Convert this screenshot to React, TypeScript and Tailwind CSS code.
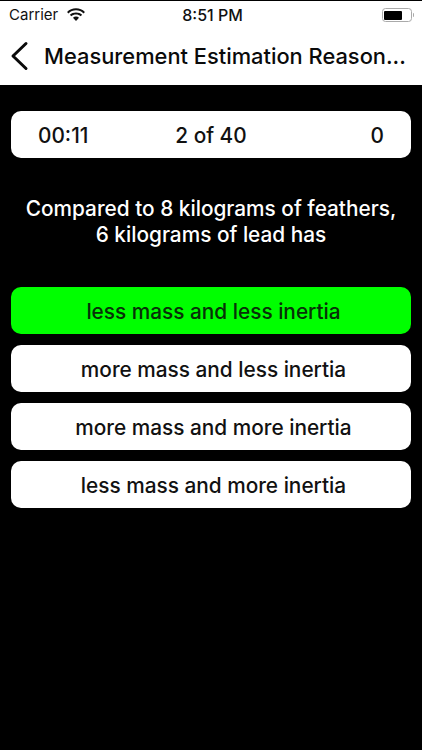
const ANSWERS = [
  { text: "less mass and less inertia", correct: true },
  { text: "more mass and less inertia", correct: false },
  { text: "more mass and more inertia", correct: false },
  { text: "less mass and more inertia", correct: false },
];

export default function App() {
  return (
    <div className="flex h-[750px] w-[422px] flex-col overflow-hidden bg-black font-['Inter',sans-serif]">
      {/* Status bar + nav */}
      <header className="mt-px h-[84px] shrink-0 bg-white">
        <div className="relative flex h-[28px] items-center pl-[9px] pr-[8px] text-[15px] text-[#111]">
          <span>Carrier</span>
          <svg className="ml-[8px]" width="20" height="14" viewBox="0 0 18 13" fill="#111" aria-hidden="true">
            <path d="M9 2.2c2.7 0 5.1 1 7 2.8l1.3-1.4C15.100 1.500 12.200.300 9 .300S2.900 1.500.700 3.600L2 5c1.900-1.800 4.300-2.800 7-2.800z" />
            <path d="M9 6c1.700 0 3.200.600 4.400 1.700l1.300-1.400C13.200 4.900 11.200 4.100 9 4.100s-4.200.800-5.700 2.200l1.300 1.400C5.800 6.600 7.300 6 9 6z" />
            <path d="M9 7.900c-1.100 0-2 .400-2.800 1.100L9 12l2.800-3c-.800-.700-1.700-1.100-2.800-1.100z" />
          </svg>
          <span className="absolute left-[3px] right-0 text-center text-[16px] font-medium">8:51 PM</span>
          <div className="ml-auto flex items-center gap-px">
            <div className="h-[14px] w-[30px] rounded-[3.5px] border border-[#aaa] p-[1.5px]">
              <div className="h-full w-[18px] rounded-[1px] bg-black" />
            </div>
            <div className="h-[4px] w-[1.500px] rounded-r-sm bg-[#aaa]" />
          </div>
        </div>
        <div className="flex h-[54px] items-center text-[21.85px] font-medium text-[#0a0a0a]">
          <svg className="ml-[10px] mr-[15px] shrink-0" width="19" height="30" viewBox="0 0 19 30" fill="none" stroke="#0a0a0a" strokeWidth="3" strokeLinecap="round" strokeLinejoin="round" aria-hidden="true">
            <path d="M16 2.500 3 15l13 12.500" />
          </svg>
          <span className="whitespace-nowrap">Measurement Estimation Reason...</span>
        </div>
      </header>

      <main className="flex flex-col px-[11px] pt-[26px]">
        <div className="grid h-[47px] grid-cols-3 items-center rounded-[10px] bg-white pl-[27px] pr-[27px] pt-[2px] text-[20.8px] font-medium text-[#111]">
          <span>00:11</span>
          <span className="text-center">2 of 40</span>
          <span className="text-right">0</span>
        </div>

        <p className="mt-[38px] text-center text-[20.8px] font-medium leading-[26px] text-white">
          Compared to 8 kilograms of feathers,
          <br />6 kilograms of lead has
        </p>

        <div className="mt-[39px] flex flex-col gap-[11px]">
          {ANSWERS.map((a) => (
            <button
              key={a.text}
              className={`h-[47px] rounded-[10px] pl-[5px] pt-[2px] text-center text-[20.8px] font-medium ${a.correct ? "bg-[#00ff00] text-[#083008]" : "bg-white text-[#111]"}`}
            >
              {a.text}
            </button>
          ))}
        </div>
      </main>
    </div>
  );
}
